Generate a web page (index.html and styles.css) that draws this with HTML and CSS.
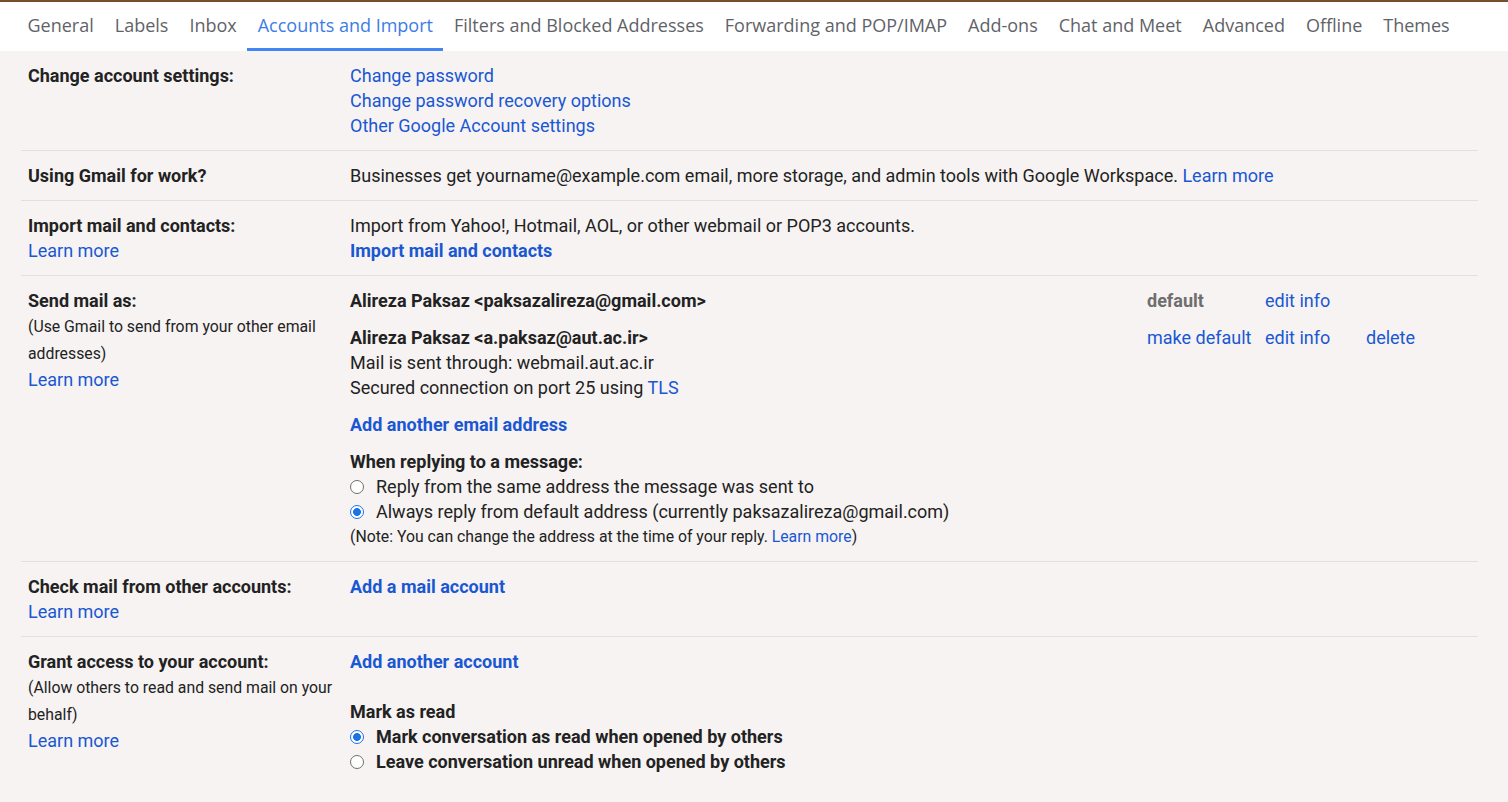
FILE: index.html
```html
<!DOCTYPE html>
<html lang="en">
<head>
<meta charset="utf-8">
<title>Settings - Accounts and Import</title>
<link rel="stylesheet" href="styles.css">
</head>
<body>
<div class="topline"></div>
<nav class="tabs">
  <a class="tab">General</a>
  <a class="tab">Labels</a>
  <a class="tab">Inbox</a>
  <a class="tab active">Accounts and Import</a>
  <a class="tab">Filters and Blocked Addresses</a>
  <a class="tab">Forwarding and POP/IMAP</a>
  <a class="tab">Add-ons</a>
  <a class="tab">Chat and Meet</a>
  <a class="tab">Advanced</a>
  <a class="tab">Offline</a>
  <a class="tab">Themes</a>
</nav>

<main class="settings">
  <section class="row">
    <div class="label"><div class="title">Change account settings:</div></div>
    <div class="value">
      <div class="line"><a class="link">Change password</a></div>
      <div class="line"><a class="link">Change password recovery options</a></div>
      <div class="line"><a class="link">Other Google Account settings</a></div>
    </div>
  </section>

  <section class="row">
    <div class="label"><div class="title">Using Gmail for work?</div></div>
    <div class="value">
      <div class="line">Businesses get yourname@example.com email, more storage, and admin tools with Google Workspace. <a class="link">Learn more</a></div>
    </div>
  </section>

  <section class="row">
    <div class="label">
      <div class="title">Import mail and contacts:</div>
      <div class="line"><a class="link">Learn more</a></div>
    </div>
    <div class="value">
      <div class="line">Import from Yahoo!, Hotmail, AOL, or other webmail or POP3 accounts.</div>
      <div class="line"><a class="link bold">Import mail and contacts</a></div>
    </div>
  </section>

  <section class="row">
    <div class="label">
      <div class="title">Send mail as:</div>
      <div class="note">(Use Gmail to send from your other email addresses)</div>
      <div class="line"><a class="link">Learn more</a></div>
    </div>
    <div class="value">
      <div class="sendas">
        <div class="addr">
          <div class="line bold">Alireza Paksaz &lt;paksazalireza@gmail.com&gt;</div>
        </div>
        <div class="line bold muted">default</div>
        <div class="line"><a class="link">edit info</a></div>
        <div></div>

        <div class="addr">
          <div class="line bold">Alireza Paksaz &lt;a.paksaz@aut.ac.ir&gt;</div>
          <div class="line">Mail is sent through: webmail.aut.ac.ir</div>
          <div class="line">Secured connection on port 25 using <a class="link">TLS</a></div>
        </div>
        <div class="line"><a class="link">make default</a></div>
        <div class="line"><a class="link">edit info</a></div>
        <div class="line"><a class="link">delete</a></div>
      </div>
      <div class="line gap-top"><a class="link bold">Add another email address</a></div>
      <div class="line gap-top2 bold">When replying to a message:</div>
      <label class="radio-line"><input type="radio" name="reply"><span>Reply from the same address the message was sent to</span></label>
      <label class="radio-line"><input type="radio" name="reply" checked><span>Always reply from default address (currently paksazalireza@gmail.com)</span></label>
      <div class="smallnote">(Note: You can change the address at the time of your reply. <a class="link">Learn more</a>)</div>
    </div>
  </section>

  <section class="row">
    <div class="label">
      <div class="title">Check mail from other accounts:</div>
      <div class="line"><a class="link">Learn more</a></div>
    </div>
    <div class="value">
      <div class="line"><a class="link bold">Add a mail account</a></div>
    </div>
  </section>

  <section class="row last">
    <div class="label">
      <div class="title">Grant access to your account:</div>
      <div class="note">(Allow others to read and send mail on your behalf)</div>
      <div class="line"><a class="link">Learn more</a></div>
    </div>
    <div class="value">
      <div class="line"><a class="link bold">Add another account</a></div>
      <div class="line gap-top3 bold">Mark as read</div>
      <label class="radio-line bold"><input type="radio" name="read" checked><span>Mark conversation as read when opened by others</span></label>
      <label class="radio-line bold"><input type="radio" name="read"><span>Leave conversation unread when opened by others</span></label>
    </div>
  </section>
</main>
</body>
</html>
```

FILE: styles.css
```css
* { box-sizing: border-box; }

html, body {
  margin: 0;
  padding: 0;
}

body {
  background: #f6f3f2;
  font-family: Roboto, "Liberation Sans", Arial, sans-serif;
  font-size: 18px;
  color: #222222;
  overflow: hidden;
}

.topline {
  height: 2px;
  background: #74502f;
}

.tabs {
  display: flex;
  background: #ffffff;
  height: 49px;
  padding-left: 17px;
  font-family: "Open Sans", "Noto Sans", sans-serif;
  font-size: 18px;
}

.tab {
  display: block;
  padding: 0 10.5px;
  line-height: 46px;
  height: 49px;
  color: #5f6368;
  white-space: nowrap;
  border-bottom: 3px solid transparent;
  cursor: pointer;
}

.tab.active {
  color: #3c7ce6;
  border-bottom-color: #4285f4;
}

.settings {
  margin: 0 30px 0 21px;
}

.row {
  display: flex;
  padding: 12px 0 12px;
  border-bottom: 1px solid #e2dfde;
}

.row.last {
  border-bottom: none;
}

.label {
  flex: 0 0 329px;
  padding: 0 10px 0 7px;
}

.title {
  font-weight: 700;
  line-height: 25px;
}

.note {
  font-size: 15.8px;
  line-height: 27px;
}

.value {
  flex: 1;
}

.line {
  line-height: 25px;
  white-space: nowrap;
}

.bold {
  font-weight: 700;
}

.muted {
  color: #6e6e6e;
}

.link {
  color: #1a57d3;
  cursor: pointer;
}

.sendas {
  display: grid;
  grid-template-columns: 797px 118px 101px auto;
  row-gap: 11.5px;
}

.gap-top {
  margin-top: 12px;
}

.gap-top2 {
  margin-top: 12.5px;
}

.gap-top3 {
  margin-top: 25px;
}

.radio-line {
  display: flex;
  align-items: center;
  height: 25px;
  cursor: pointer;
}

.radio-line input {
  appearance: none;
  -webkit-appearance: none;
  flex: 0 0 auto;
  margin: 1px 12px 0 0;
  width: 14px;
  height: 14px;
  border: 1px solid #6f6f6f;
  border-radius: 50%;
  background: #ffffff;
}

.radio-line input:checked {
  border: 1.5px solid #1a73e8;
  background: radial-gradient(circle, #1a73e8 0 3.6px, #ffffff 4.2px);
}

.smallnote {
  font-size: 15.8px;
  line-height: 25px;
}
```
